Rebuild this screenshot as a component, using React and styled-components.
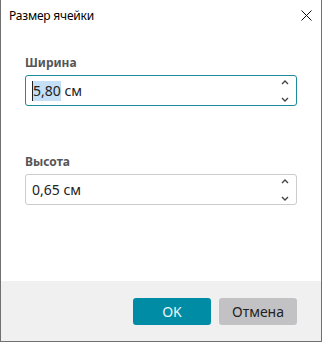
import React from 'react';
import styled, { createGlobalStyle } from 'styled-components';

const Global = createGlobalStyle`
  html, body {
    margin: 0;
    padding: 0;
    background: #ffffff;
  }
  body {
    font-family: "Noto Sans", "Open Sans", sans-serif;
  }
`;

const Window = styled.div`
  width: 322px;
  height: 342px;
  box-sizing: border-box;
  display: flex;
  flex-direction: column;
  background: #ffffff;
  border: 1px solid #707070;
  border-top: none;
`;

const TitleBar = styled.div`
  height: 31px;
  display: flex;
  align-items: center;
  justify-content: space-between;
  padding-left: 8px;
  padding-right: 9px;
`;

const Title = styled.span`
  font-size: 12px;
  color: #000000;
  letter-spacing: -0.2px;
`;

const CloseButton = styled.button`
  border: none;
  background: none;
  padding: 0;
  width: 12px;
  height: 12px;
  display: flex;
  align-items: center;
  justify-content: center;
`;

const Content = styled.div`
  flex: 1;
  display: flex;
  flex-direction: column;
  gap: 48px;
  padding: 24px 24px 0 24px;
`;

const Field = styled.div`
  display: flex;
  flex-direction: column;
  gap: 4px;
`;

const Label = styled.label`
  font-size: 12px;
  font-weight: 700;
  color: #555555;
  line-height: 16px;
`;

const InputBox = styled.div`
  height: 31px;
  box-sizing: border-box;
  display: flex;
  align-items: center;
  border: 1px solid ${p => (p.focused ? '#1a8a9c' : '#cccccc')};
  border-radius: 3px;
  padding: 0 6px 0 6px;
`;

const Value = styled.span`
  flex: 1;
  font-size: 14px;
  color: #222222;
  display: flex;
  align-items: center;
`;

const Selected = styled.span`
  background: #c4dff6;
  border-left: 1px solid #222222;
  line-height: 20px;
`;

const Spinner = styled.div`
  display: flex;
  flex-direction: column;
  gap: 12px;
  width: 10px;
  align-items: center;
`;

const Footer = styled.div`
  height: 60px;
  background: #f0f0f0;
  display: flex;
  align-items: center;
  justify-content: flex-end;
  gap: 8px;
  padding-right: 24px;
`;

const Button = styled.button`
  width: 78px;
  height: 27px;
  border: none;
  border-radius: 3px;
  font-family: inherit;
  font-size: 14px;
  background: ${p => (p.primary ? '#008ca5' : '#c2c2c4')};
  color: ${p => (p.primary ? '#eaf6f8' : '#222222')};
  padding: 0;
`;

const Chevron = ({ up }) => (
  <svg width="8" height="5" viewBox="0 0 8 5">
    <path
      d={up ? 'M1 4 L4 1 L7 4' : 'M1 1 L4 4 L7 1'}
      fill="none"
      stroke="#444"
      strokeWidth="1.4"
    />
  </svg>
);

const SpinControl = () => (
  <Spinner>
    <Chevron up />
    <Chevron />
  </Spinner>
);

export default function App() {
  return (
    <>
      <Global />
      <Window>
        <TitleBar>
          <Title>Размер ячейки</Title>
          <CloseButton>
            <svg width="11" height="11" viewBox="0 0 11 11">
              <path d="M0.5 0.5 L10.5 10.5 M10.5 0.5 L0.5 10.5" stroke="#111" strokeWidth="1" />
            </svg>
          </CloseButton>
        </TitleBar>
        <Content>
          <Field>
            <Label>Ширина</Label>
            <InputBox focused>
              <Value>
                <Selected>5,80</Selected>&nbsp;см
              </Value>
              <SpinControl />
            </InputBox>
          </Field>
          <Field>
            <Label>Высота</Label>
            <InputBox>
              <Value>0,65 см</Value>
              <SpinControl />
            </InputBox>
          </Field>
        </Content>
        <Footer>
          <Button primary>OK</Button>
          <Button>Отмена</Button>
        </Footer>
      </Window>
    </>
  );
}
